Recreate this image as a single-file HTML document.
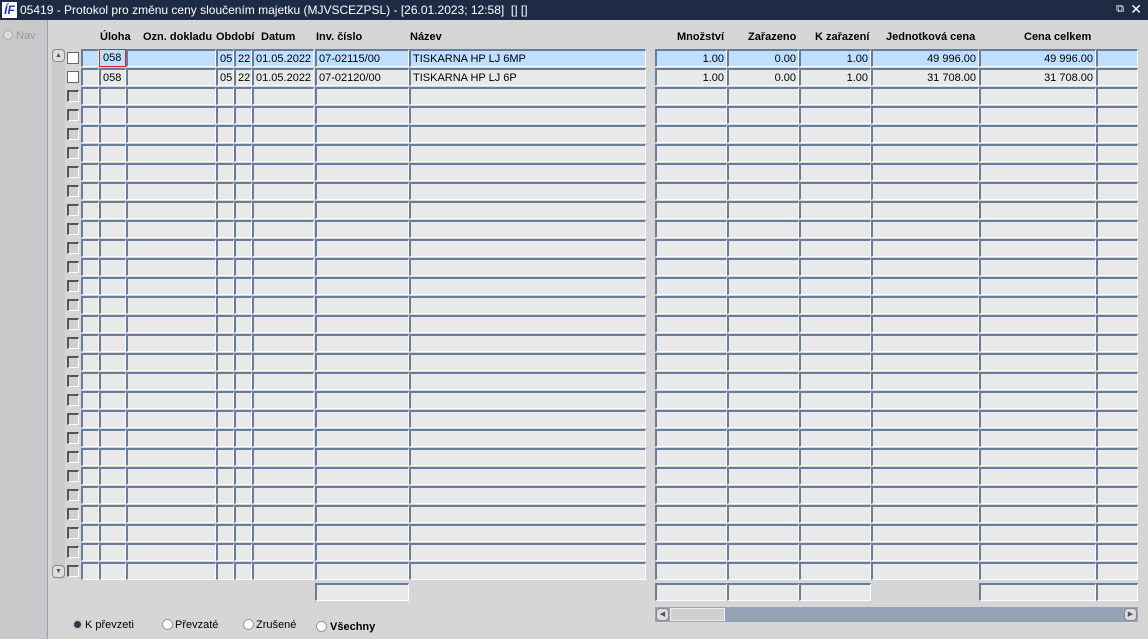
<!DOCTYPE html>
<html><head><meta charset="utf-8"><style>
*{box-sizing:border-box;margin:0;padding:0}
body{width:1148px;height:639px;overflow:hidden;background:#d6d6d6;font-family:"Liberation Sans",Arial,sans-serif;font-size:11px;color:#000;position:relative}
.a{position:absolute}
.t{left:0;top:0;width:1148px;height:20px;background:#1e2b45;color:#fff;font-size:12px;line-height:20px;padding-left:20px}
.c{position:absolute;height:18px;background:#e9e9e9;border-top:2px solid #6a7c9c;border-left:2px solid #6a7c9c;border-bottom:1px solid #fff;border-right:1px solid #fff;line-height:16px;padding:0 2px;white-space:nowrap;overflow:hidden}
.s{background:#bfdfff}
.r{text-align:right}
.cb{position:absolute;width:12px;height:12px;background:#d0d0d0;border-top:2px solid #555;border-left:2px solid #555;border-right:1px solid #fff;border-bottom:1px solid #fff}
.w{background:#fff;border:1px solid #666}
.h{position:absolute;top:31px;font-weight:bold;font-size:11px}
.rd{position:absolute;top:619px;width:11px;height:11px;border-radius:50%;background:#fff;border:1px solid #999}
</style></head><body>
<div class="a t">05419 - Protokol pro změnu ceny sloučením majetku (MJVSCEZPSL) - [26.01.2023; 12:58]&nbsp; [] []</div>
<div class="a" style="left:2px;top:2px;width:15px;height:16px;background:#fff;color:#1a3aa8;font:bold italic 12px/16px 'Liberation Sans';text-align:center">ÍF</div>
<div class="a" style="right:24px;top:3px;color:#fff;font-size:11px">⧉</div>
<div class="a" style="right:6px;top:1px;color:#fff;font-size:14px">✕</div>
<div class="a" style="left:0;top:20px;width:48px;height:619px;background:#c8c8c8;border-right:1px solid #8fa0b8"></div>
<div class="a" style="left:3px;top:30px;width:10px;height:10px;border-radius:50%;background:#ddd;border:1px solid #aaa"></div>
<div class="a" style="left:16px;top:30px;color:#999;font-size:11px">Nav</div>
<div class="a" style="left:52px;top:49px;width:13px;height:530px;background:#cbcbcb"></div>
<div class="a" style="left:52px;top:49px;width:13px;height:13px;border:1px solid #888;border-radius:4px;background:#ddd;font-size:7px;text-align:center;line-height:11px;color:#555">▲</div>
<div class="a" style="left:52px;top:565px;width:13px;height:13px;border:1px solid #888;border-radius:4px;background:#ddd;font-size:7px;text-align:center;line-height:11px;color:#555">▼</div>
<div class="h" style="left:100px">Úloha</div>
<div class="h" style="left:143px">Ozn. dokladu</div>
<div class="h" style="left:216px">Období</div>
<div class="h" style="left:261px">Datum</div>
<div class="h" style="left:316px">Inv. číslo</div>
<div class="h" style="left:410px">Název</div>
<div class="h" style="left:677px">Množství</div>
<div class="h" style="left:748px">Zařazeno</div>
<div class="h" style="left:815px">K zařazení</div>
<div class="h" style="left:886px">Jednotková cena</div>
<div class="h" style="left:1024px">Cena celkem</div>
<div id="g"></div>
<div class="c" style="left:315px;top:583px;width:94px"></div>
<div class="c" style="left:655px;top:583px;width:72px"></div>
<div class="c" style="left:727px;top:583px;width:72px"></div>
<div class="c" style="left:799px;top:583px;width:72px"></div>
<div class="c" style="left:979px;top:583px;width:117px"></div>
<div class="c" style="left:1096px;top:583px;width:42px"></div>
<div class="a" style="left:655px;top:607px;width:483px;height:15px;background:#94a3b6"></div>
<div class="a" style="left:656px;top:608px;width:13px;height:13px;background:#ddd;border:1px solid #888;border-radius:4px;font-size:7px;line-height:11px;text-align:center;color:#555">◀</div>
<div class="a" style="left:670px;top:608px;width:55px;height:13px;background:#d0d0d0;border:1px solid #eee"></div>
<div class="a" style="left:1124px;top:608px;width:13px;height:13px;background:#ddd;border:1px solid #888;border-radius:4px;font-size:7px;line-height:11px;text-align:center;color:#555">▶</div>
<div class="rd" style="left:72px;background:#2a3548;border:2px solid #ccc"></div><div class="a" style="left:85px;top:619px">K převzeti</div>
<div class="rd" style="left:162px"></div><div class="a" style="left:175px;top:619px">Převzaté</div>
<div class="rd" style="left:243px"></div><div class="a" style="left:256px;top:619px">Zrušené</div>
<div class="rd" style="left:316px;top:621px"></div><div class="a" style="left:330px;top:621px;font-weight:bold">Všechny</div>
<script>
var cols=[[81,18],[99,27],[126,90],[216,18],[234,18],[252,62],[315,94],[409,237],[655,72],[727,72],[799,72],[871,108],[979,117],[1096,42]];
var data=[["","058","","05","22","01.05.2022","07-02115/00","TISKARNA HP LJ 6MP","1.00","0.00","1.00","49 996.00","49 996.00",""],["","058","","05","22","01.05.2022","07-02120/00","TISKARNA HP LJ 6P","1.00","0.00","1.00","31 708.00","31 708.00",""]];
var h="";
for(var r=0;r<28;r++){var y=49+r*19;
h+='<div class="cb'+(r<2?' w':'')+'" style="left:67px;top:'+(y+3)+'px"></div>';
for(var c=0;c<cols.length;c++){var v=r<2?data[r][c]:"";
var st="";if(r==0&&c==1)st="border:1px solid #e02020;background:#bfdfff;line-height:17px;padding-left:3px;";
h+='<div class="c'+(r==0?' s':'')+(c>=8?' r':'')+'" style="'+st+'left:'+cols[c][0]+'px;top:'+y+'px;width:'+cols[c][1]+'px">'+v+'</div>';}}
document.getElementById("g").innerHTML=h;
</script>
</body></html>
